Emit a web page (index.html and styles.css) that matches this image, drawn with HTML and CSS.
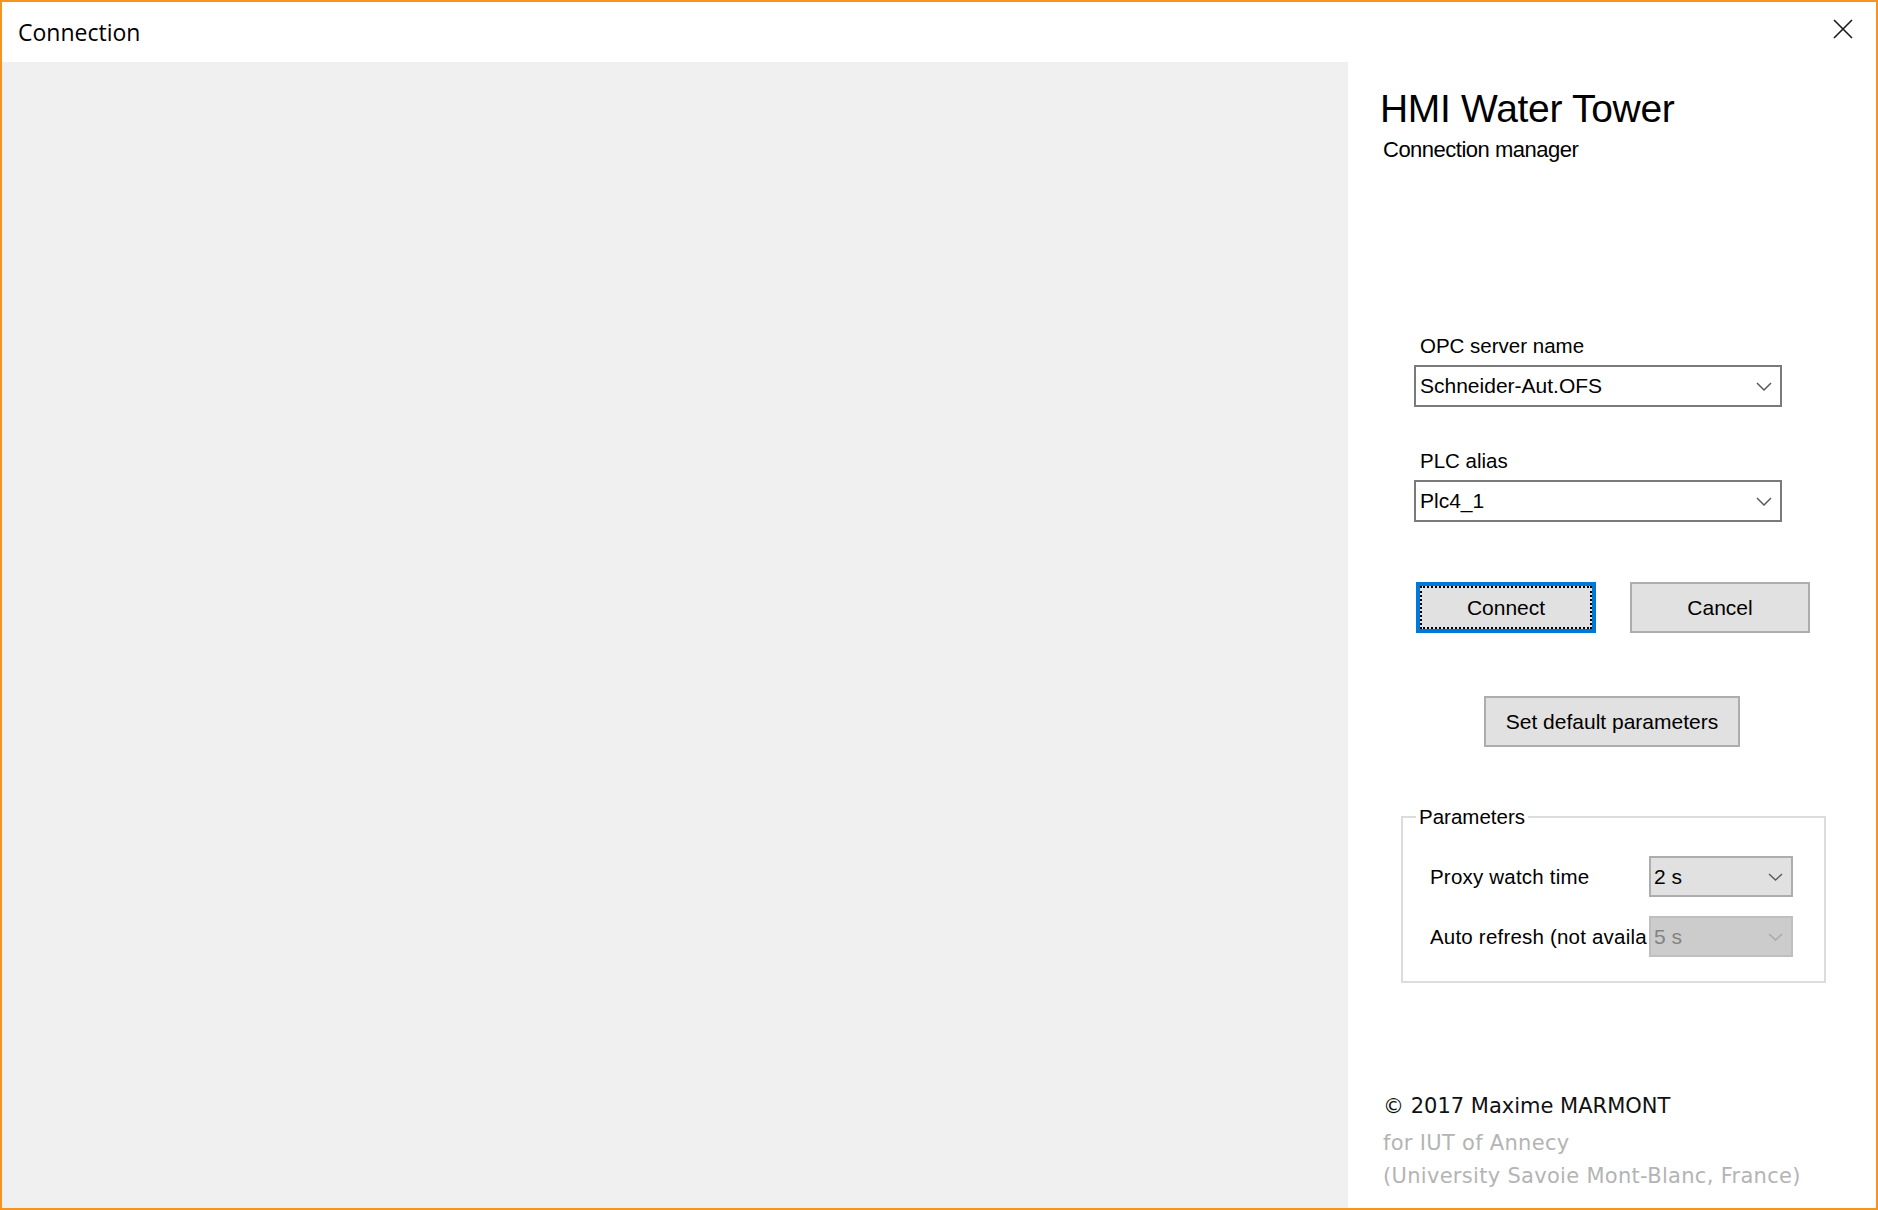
FILE: index.html
```html
<!DOCTYPE html>
<html lang="en">
<head>
<meta charset="utf-8">
<title>Connection</title>
<link rel="stylesheet" href="styles.css">
</head>
<body>
<div class="window">
  <div class="titlebar">
    <span class="title">Connection</span>
    <button class="close" aria-label="Close">
      <svg width="20" height="20" viewBox="0 0 20 20"><path d="M1 1 L19 19 M19 1 L1 19" stroke="#1a1a1a" stroke-width="1.6" fill="none"/></svg>
    </button>
  </div>
  <div class="content">
    <div class="canvas"></div>
    <div class="side">
      <div class="app-title">HMI Water Tower</div>
      <div class="app-sub">Connection manager</div>

      <div class="field field-first">
        <div class="field-label">OPC server name</div>
        <div class="combo">
          <span>Schneider-Aut.OFS</span>
          <svg class="chev" width="16" height="9" viewBox="0 0 16 9"><polyline points="1,1 8,8 15,1" fill="none" stroke="#5a5a5a" stroke-width="1.5"/></svg>
        </div>
      </div>

      <div class="field field-second">
        <div class="field-label">PLC alias</div>
        <div class="combo">
          <span>Plc4_1</span>
          <svg class="chev" width="16" height="9" viewBox="0 0 16 9"><polyline points="1,1 8,8 15,1" fill="none" stroke="#5a5a5a" stroke-width="1.5"/></svg>
        </div>
      </div>

      <div class="buttons">
        <button class="btn btn-default">Connect</button>
        <button class="btn">Cancel</button>
      </div>

      <button class="btn btn-wide">Set default parameters</button>

      <fieldset class="group">
        <legend>Parameters</legend>
        <div class="param-row">
          <div class="param-label">Proxy watch time</div>
          <div class="small-combo">
            <span>2 s</span>
            <svg width="15" height="8" viewBox="0 0 15 8"><polyline points="1,1 7.5,7 14,1" fill="none" stroke="#5a5a5a" stroke-width="1.4"/></svg>
          </div>
        </div>
        <div class="param-row">
          <div class="param-label">Auto refresh (not availa</div>
          <div class="small-combo disabled">
            <span>5 s</span>
            <svg width="15" height="8" viewBox="0 0 15 8"><polyline points="1,1 7.5,7 14,1" fill="none" stroke="#a8a8a8" stroke-width="1.4"/></svg>
          </div>
        </div>
      </fieldset>

      <div class="credits">
        <div class="credit-main">© 2017 Maxime MARMONT</div>
        <div class="credit-sub credit-first">for IUT of Annecy</div>
        <div class="credit-sub">(University Savoie Mont-Blanc, France)</div>
      </div>
    </div>
  </div>
</div>
</body>
</html>
```

FILE: styles.css
```css
html, body {
  margin: 0;
  padding: 0;
  background: #ffffff;
}

.window {
  width: 1878px;
  height: 1210px;
  box-sizing: border-box;
  border: 2px solid #f7941d;
  background: #ffffff;
  display: flex;
  flex-direction: column;
  overflow: hidden;
}

.titlebar {
  height: 60px;
  flex: none;
  display: flex;
  align-items: flex-start;
  box-sizing: border-box;
  padding: 15px 0 0 16px;
  background: #ffffff;
}

.title {
  font-family: "Open Sans", "Noto Sans", sans-serif;
  font-size: 23px;
  line-height: 30px;
  color: #000000;
}

.close {
  margin-left: auto;
  margin-right: 23px;
  margin-top: 2px;
  padding: 0;
  border: 0;
  background: transparent;
  width: 20px;
  height: 20px;
  display: block;
}

.close svg {
  display: block;
}

.content {
  flex: 1;
  display: flex;
  min-height: 0;
}

.canvas {
  width: 1346px;
  flex: none;
  background: #f0f0f0;
}

.side {
  flex: 1;
  background: #ffffff;
  padding-top: 25px;
  font-family: "Liberation Sans", Arial, sans-serif;
  color: #000000;
}

.app-title {
  margin-left: 32px;
  font-size: 39px;
  line-height: 44px;
  letter-spacing: -0.3px;
}

.app-sub {
  margin: 6px 0 0 35px;
  font-size: 22px;
  line-height: 26px;
  letter-spacing: -0.5px;
}

.field {
  margin-left: 66px;
  width: 368px;
}

.field-first {
  margin-top: 171px;
}

.field-second {
  margin-top: 42px;
}

.field-label {
  padding-left: 6px;
  font-size: 20.5px;
  line-height: 24px;
}

.combo {
  margin-top: 7px;
  height: 42px;
  box-sizing: border-box;
  border: 2px solid #7a7a7a;
  background: #ffffff;
  padding: 0 8px 0 4px;
  display: flex;
  align-items: center;
  justify-content: space-between;
  font-size: 21px;
}

.chev {
  display: block;
}

.buttons {
  margin: 60px 0 0 68px;
  display: flex;
  gap: 34px;
}

.btn {
  height: 51px;
  width: 180px;
  box-sizing: border-box;
  border: 2px solid #adadad;
  background: #e1e1e1;
  font-family: "Liberation Sans", Arial, sans-serif;
  font-size: 21px;
  color: #000000;
  padding: 0;
  display: block;
}

.btn-default {
  border: 4px solid #0078d7;
  outline: 2px dotted #000000;
  outline-offset: -6px;
}

.btn-wide {
  width: 256px;
  margin: 63px 0 0 136px;
}

.group {
  margin: 58px 0 0 53px;
  width: 425px;
  box-sizing: border-box;
  border: 2px solid #dcdcdc;
  padding: 27px 0 24px 0;
  display: flex;
  flex-direction: column;
  gap: 19px;
}

.group legend {
  margin-left: 13px;
  padding: 0 3px;
  font-size: 20.5px;
  line-height: 24px;
}

.param-row {
  display: flex;
  align-items: center;
  height: 41px;
  padding-left: 27px;
}

.param-label {
  width: 219px;
  flex: none;
  overflow: hidden;
  white-space: nowrap;
  font-size: 20.5px;
  line-height: 24px;
  letter-spacing: 0.2px;
}

.small-combo {
  width: 144px;
  height: 41px;
  box-sizing: border-box;
  border: 2px solid #adadad;
  background: #e1e1e1;
  padding: 0 8px 0 3px;
  display: flex;
  align-items: center;
  justify-content: space-between;
  font-size: 21px;
}

.small-combo svg {
  display: block;
}

.small-combo.disabled {
  background: #cccccc;
  border-color: #bfbfbf;
  color: #838383;
}

.credits {
  margin: 110px 0 0 35px;
  font-family: "DejaVu Sans", sans-serif;
}

.credit-main {
  font-size: 21px;
  line-height: 26px;
  color: #111111;
}

.credit-sub {
  font-size: 21px;
  line-height: 33px;
  letter-spacing: 0.3px;
  color: #b4b4b4;
}

.credit-first {
  margin-top: 8px;
}
```
